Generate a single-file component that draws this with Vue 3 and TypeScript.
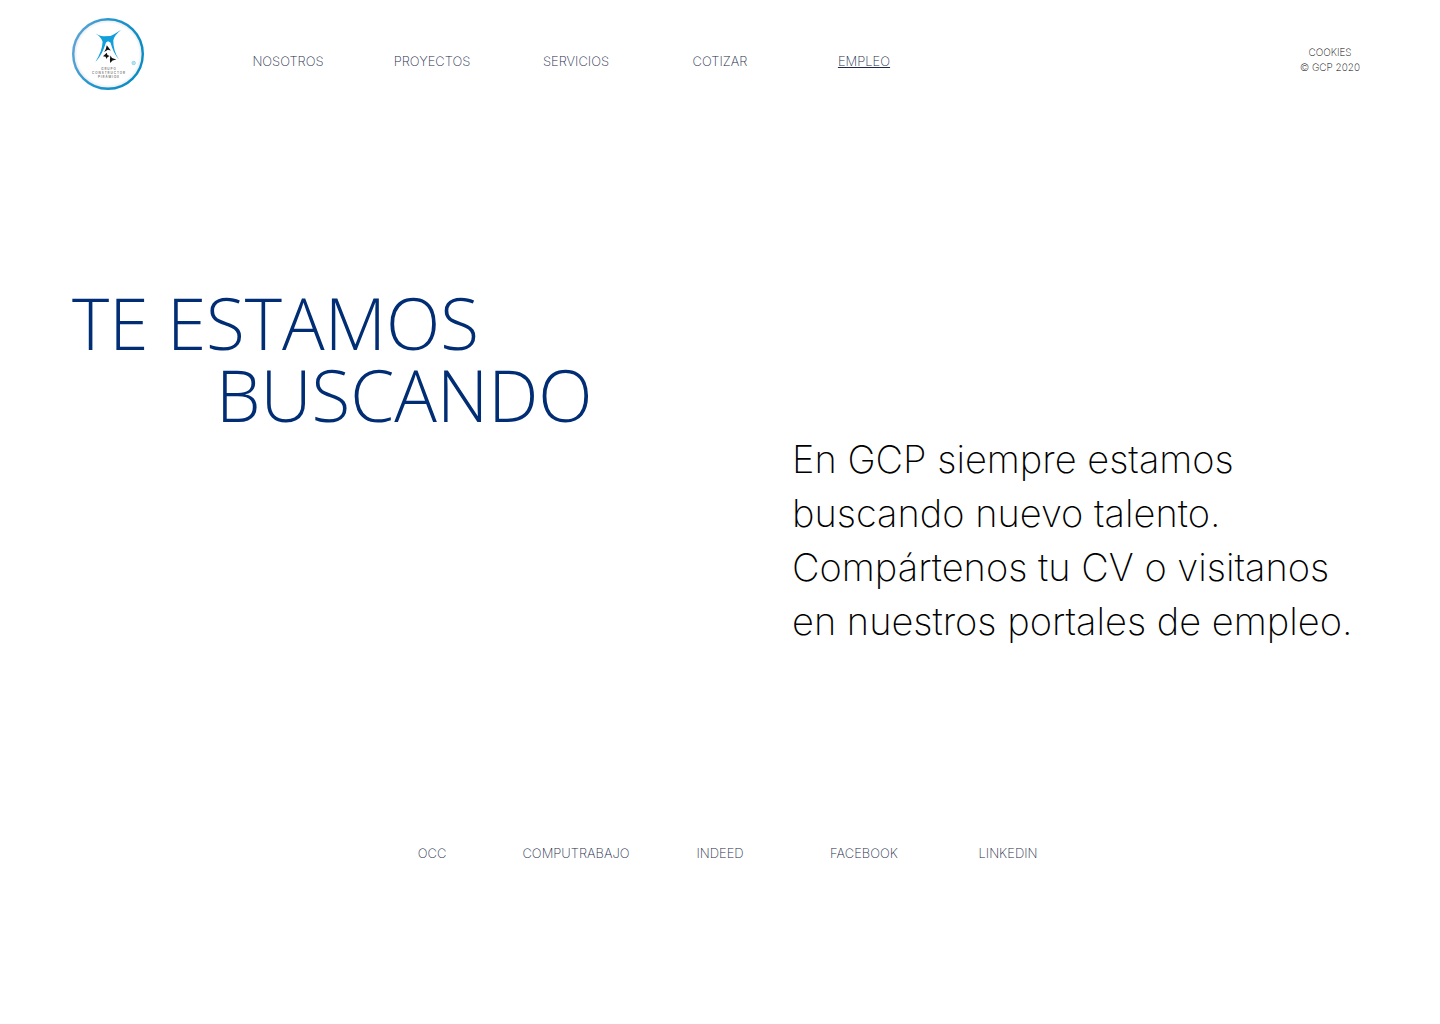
<script setup lang="ts">
interface LinkItem {
  label: string
  href: string
  current?: boolean
}

const sections: LinkItem[] = [
  { label: 'NOSOTROS', href: '#nosotros' },
  { label: 'PROYECTOS', href: '#proyectos' },
  { label: 'SERVICIOS', href: '#servicios' },
  { label: 'COTIZAR', href: '#cotizar' },
  { label: 'EMPLEO', href: '#empleo', current: true },
]

const portals: LinkItem[] = [
  { label: 'OCC', href: '#occ' },
  { label: 'COMPUTRABAJO', href: '#computrabajo' },
  { label: 'INDEED', href: '#indeed' },
  { label: 'FACEBOOK', href: '#facebook' },
  { label: 'LINKEDIN', href: '#linkedin' },
]
</script>

<template>
  <div class="page">
    <header class="header">
      <a class="logo" href="#inicio" aria-label="Grupo Constructor Pirámide">
        <svg viewBox="0 0 72 72" width="72" height="72" aria-hidden="true">
          <defs>
            <linearGradient id="ring" x1="0" y1="0" x2="1" y2="0.3">
              <stop offset="0" stop-color="#6aa7d8" />
              <stop offset="0.5" stop-color="#2296cf" />
              <stop offset="1" stop-color="#0a8cc4" />
            </linearGradient>
            <radialGradient id="disc">
              <stop offset="0.88" stop-color="#ffffff" />
              <stop offset="1" stop-color="#dfe3e8" />
            </radialGradient>
          </defs>
          <circle cx="36" cy="36" r="34.8" fill="url(#disc)" stroke="url(#ring)" stroke-width="2.4" />
          <path
            d="M21.500 14.200C26 17 29 18.400 32 18.200L38.500 18C42 17 45 14.200 49.500 11.600C45 15.500 41.800 19 41.300 22.500C41.200 29 43 35.500 47 41.500C42.600 36.500 40.400 31 38.600 25C37.200 23 35 23 33.800 25C31.800 31.500 29 38 23.400 44C28 36.500 30.300 30 30.600 24C29.800 20 26.500 17 21.500 14.200Z"
            fill="#119fdc"
          />
          <path d="M34.800 27.200L38.800 32.400L35.900 31.800L32.200 34L33.800 31Z" fill="#111" />
          <path d="M31 38.200L34.800 34.800L35.400 37L37.600 37.900L35.400 39.200L34.600 41L33.600 38.800Z" fill="#111" />
          <path d="M38.400 37.400L40 40L44.400 41.600L40.500 42.500L38.200 45L37.900 41.700Z" fill="#111" />
          <circle cx="61.700" cy="45" r="1.700" fill="none" stroke="#45b5df" stroke-width="0.600" />
          <path d="M62.400 44.400A0.800 0.800 0 1 0 62.400 45.600" fill="none" stroke="#45b5df" stroke-width="0.500" />
          <g class="logo-text">
            <text x="37" y="52">GRUPO</text>
            <text x="37" y="56">CONSTRUCTOR</text>
            <text x="37" y="60">PIRÁMIDE</text>
          </g>
        </svg>
      </a>

      <nav class="nav" aria-label="Principal">
        <a
          v-for="item in sections"
          :key="item.label"
          class="link"
          :class="{ current: item.current }"
          :href="item.href"
          :aria-current="item.current ? 'page' : undefined"
          >{{ item.label }}</a
        >
      </nav>

      <div class="legal">
        <a href="#cookies">COOKIES</a>
        <span>© GCP 2020</span>
      </div>
    </header>

    <main>
      <h1 class="title">
        <span>TE ESTAMOS</span>
        <span class="indent">BUSCANDO</span>
      </h1>
      <p class="intro">
        En GCP siempre estamos<br />
        buscando nuevo talento.<br />
        Compártenos tu CV o visitanos<br />
        en nuestros portales de empleo.
      </p>
      <nav class="portals" aria-label="Portales de empleo">
        <a v-for="item in portals" :key="item.label" class="link" :href="item.href">{{ item.label }}</a>
      </nav>
    </main>
  </div>
</template>

<style>
body {
  margin: 0;
  background: #fff;
}
</style>

<style scoped>
.page {
  font-family: Inter, 'Liberation Sans', sans-serif;
  font-weight: 200;
  color: #000;
  padding-bottom: 72px;
}

a {
  color: inherit;
  text-decoration: none;
}

.header {
  display: flex;
  align-items: flex-start;
  padding: 18px 80px 18px 5%;
}

.logo {
  width: 72px;
  height: 72px;
  flex: none;
}

.logo svg {
  display: block;
}

.logo-text {
  font-size: 3px;
  font-weight: 400;
  letter-spacing: 1px;
  text-anchor: middle;
  fill: #333;
}

.nav {
  display: flex;
  width: 50vw;
  margin-top: 31px;
  margin-left: 5vw;
}

.link {
  flex: 1;
  font-size: 13px;
  line-height: 24px;
  text-align: center;
  color: #1c2b4a;
}

.current {
  text-decoration: underline;
}

.legal {
  display: flex;
  flex-direction: column;
  align-items: center;
  margin-top: 27px;
  margin-left: auto;
  font-size: 10px;
  line-height: 15px;
}

.title {
  display: flex;
  flex-direction: column;
  margin: 179px 5% 0;
  font-family: 'Open Sans', 'Liberation Sans', sans-serif;
  font-size: 71px;
  line-height: 72px;
  font-weight: 300;
  color: #002d74;
}

.indent {
  margin-left: 10vw;
}

.intro {
  margin: 1px 0 0 55%;
  font-size: 38px;
  line-height: 54px;
  white-space: nowrap;
}

.portals {
  display: flex;
  width: 50%;
  margin: 193px auto 0;
}
</style>
